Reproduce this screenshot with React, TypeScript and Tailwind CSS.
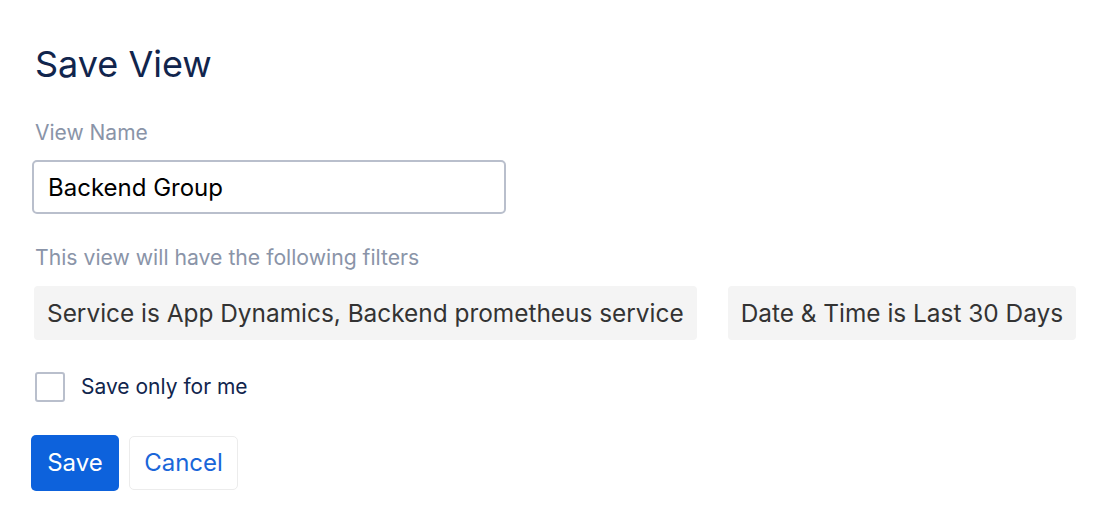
import { useState } from 'react';

const filters = [
  'Service is App Dynamics, Backend prometheus service',
  'Date & Time is Last 30 Days',
];

export default function App() {
  const [name, setName] = useState('Backend Group');
  const [onlyMe, setOnlyMe] = useState(false);

  return (
    <div className="min-h-[513px] w-[1120px] bg-white font-['Inter',sans-serif] pl-[32px] pt-[40px]">
      {/* Header */}
      <h1 className="text-[36px] leading-[48px] font-normal text-[#11254d] pl-[3px]">Save View</h1>

      {/* Name field */}
      <label className="block mt-[33px] pl-[3px] text-[21px] leading-[24px] text-[#8a94a8]">View Name</label>
      <input
        value={name}
        onChange={(e) => setName(e.target.value)}
        className="mt-[15px] block w-[474px] h-[54px] rounded-[5px] border-2 border-[#b9bfcc] px-[14px] text-[24px] text-black outline-none"
      />

      {/* Filters */}
      <p className="mt-[31px] pl-[3px] text-[21.2px] leading-[24px] text-[#8a94a8]">This view will have the following filters</p>
      <div className="mt-[17px] flex gap-[31px] pl-[2px]">
        {filters.map((f) => (
          <div key={f} className="h-[54px] flex items-center px-[13px] rounded-[4px] bg-[#f4f4f4] text-[24.4px] text-[#333333] whitespace-nowrap">
            {f}
          </div>
        ))}
      </div>

      {/* Checkbox */}
      <label className="mt-[31px] pl-[3px] flex items-center gap-[16px] cursor-pointer">
        <input
          type="checkbox"
          checked={onlyMe}
          onChange={(e) => setOnlyMe(e.target.checked)}
          className="appearance-none w-[30px] h-[30px] rounded-[3px] border-2 border-[#b9bfcc] bg-white checked:bg-[#0d62dc] checked:border-[#0d62dc]"
        />
        <span className="text-[21px] text-[#11254d]">Save only for me</span>
      </label>

      {/* Actions */}
      <div className="mt-[32px] flex items-center gap-[10px]">
        <button className="h-[56px] w-[88px] -ml-[1px] rounded-[5px] bg-[#0d62dc] text-white text-[24px]">Save</button>
        <button className="h-[54px] w-[109px] rounded-[5px] border border-[#ececec] bg-white text-[#1a66d9] text-[24px]">Cancel</button>
      </div>
    </div>
  );
}
